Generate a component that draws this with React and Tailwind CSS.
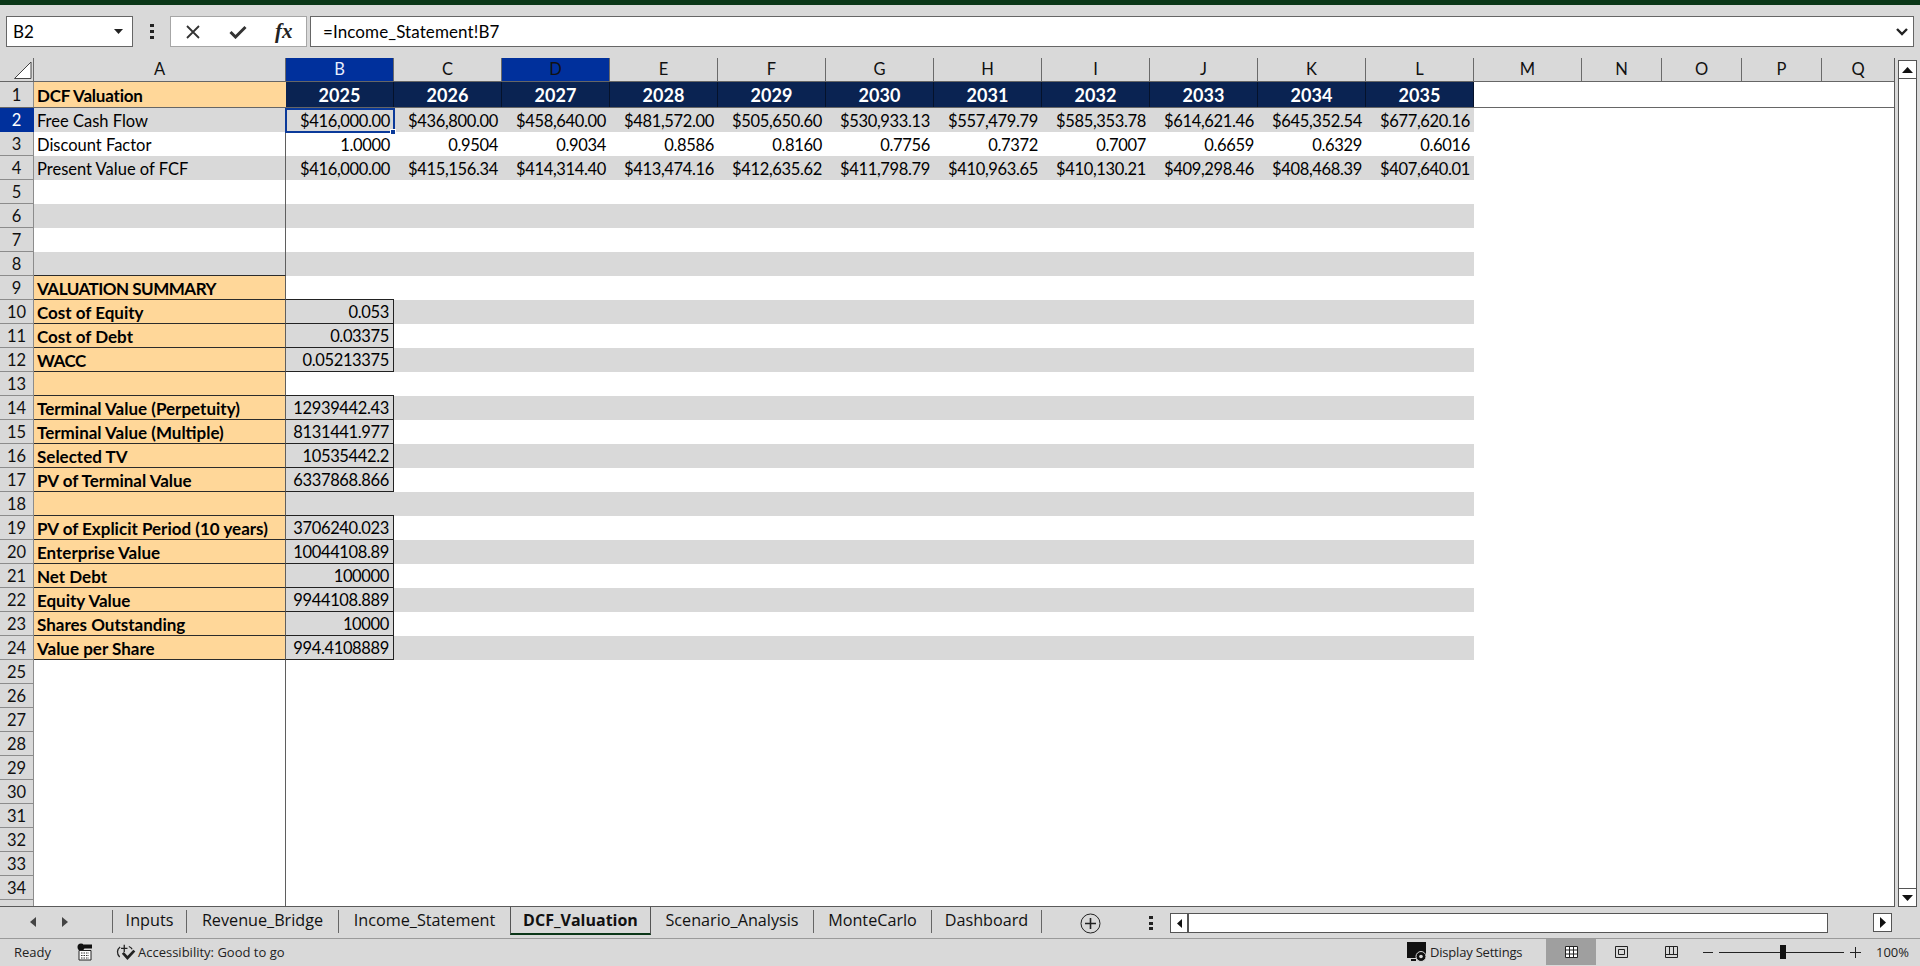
import React from 'react'

const cols = ['B', 'C', 'D', 'E', 'F', 'G', 'H', 'I', 'J', 'K', 'L']
const years = ['2025', '2026', '2027', '2028', '2029', '2030', '2031', '2032', '2033', '2034', '2035']

const fcf = ['$416,000.00', '$436,800.00', '$458,640.00', '$481,572.00', '$505,650.60', '$530,933.13', '$557,479.79', '$585,353.78', '$614,621.46', '$645,352.54', '$677,620.16']
const discount = ['1.0000', '0.9504', '0.9034', '0.8586', '0.8160', '0.7756', '0.7372', '0.7007', '0.6659', '0.6329', '0.6016']
const pv = ['$416,000.00', '$415,156.34', '$414,314.40', '$413,474.16', '$412,635.62', '$411,798.79', '$410,963.65', '$410,130.21', '$409,298.46', '$408,468.39', '$407,640.01']

const summary = {
  9: ['VALUATION SUMMARY'],
  10: ['Cost of Equity', '0.053'],
  11: ['Cost of Debt', '0.03375'],
  12: ['WACC', '0.05213375'],
  13: [''],
  14: ['Terminal Value (Perpetuity)', '12939442.43'],
  15: ['Terminal Value (Multiple)', '8131441.977'],
  16: ['Selected TV', '10535442.2'],
  17: ['PV of Terminal Value', '6337868.866'],
  18: [''],
  19: ['PV of Explicit Period (10 years)', '3706240.023'],
  20: ['Enterprise Value', '10044108.89'],
  21: ['Net Debt', '100000'],
  22: ['Equity Value', '9944108.889'],
  23: ['Shares Outstanding', '10000'],
  24: ['Value per Share', '994.4108889'],
}

const tabs = [
  { name: 'Inputs', w: 'w-[74px]' },
  { name: 'Revenue_Bridge', w: 'w-[152px]' },
  { name: 'Income_Statement', w: 'w-[172px]' },
  { name: 'DCF_Valuation', w: 'w-[141px]', active: true },
  { name: 'Scenario_Analysis', w: 'w-[163px]' },
  { name: 'MonteCarlo', w: 'w-[118px]' },
  { name: 'Dashboard', w: 'w-[110px]' },
]

const rows = []
for (let n = 2; n <= 34; n++) rows.push(n)

const ColHead = ({ label, w, selected, dark }) => (
  <div className={`${w} h-full shrink-0 flex items-center justify-center border-r border-[#6a6a6a] ${selected ? 'bg-[#00309c]' : ''} ${dark ? 'text-[#e8eefc]' : 'text-[#111]'}`}>
    {label}
  </div>
)

const SheetRow = ({ n }) => {
  const striped = n % 2 === 0 && n <= 24
  const data = summary[n]
  const values = n === 2 ? fcf : n === 3 ? discount : n === 4 ? pv : null
  const hasBox = data && data[1]
  // the cell above a boxed block draws the top edge of that block
  const capsBox = n === 9 || n === 13 || n === 18
  const caps = n === 9 || n === 12

  let aClass = ''
  if (striped) aClass = 'bg-[#d9d9d9]'
  if (data) aClass = `bg-[#ffd799] font-bold text-[17px] border-b border-[#2b2b2b] ${caps ? 'tracking-[-0.5px]' : ''}`
  if (n === 8) aClass += ' border-b border-[#2b2b2b]'

  return (
    <div className="flex h-[24px] shrink-0">
      <div className={`w-[34px] shrink-0 flex items-center justify-center pt-[2px] border-r border-b ${n === 2 ? 'bg-[#00309c] text-white border-[#00309c]' : 'bg-[#d9d9d9] text-[#111] border-[#8c8c8c]'}`}>
        {n}
      </div>
      <div className={`w-[252px] shrink-0 flex items-center pl-[3px] pt-[2px] border-r border-r-[#5f5f5f] whitespace-nowrap ${aClass}`}>
        {n === 2 ? 'Free Cash Flow' : n === 3 ? 'Discount Factor' : n === 4 ? 'Present Value of FCF' : data ? data[0] : ''}
      </div>
      {cols.map((c, i) => {
        const fill = striped || (hasBox && i === 0) ? 'bg-[#d9d9d9]' : ''
        const boxed = hasBox && i === 0 ? 'border-r border-b border-[#222]' : ''
        const cap = capsBox && i === 0 ? 'border-b border-[#222]' : ''
        return (
          <div key={c} className={`w-[108px] shrink-0 flex items-center justify-end pr-[4px] pt-[2px] tracking-[-0.35px] ${fill} ${boxed} ${cap}`}>
            {values ? values[i] : hasBox && i === 0 ? data[1] : ''}
          </div>
        )
      })}
    </div>
  )
}

const ArrowBtn = ({ children, className }) => (
  <div className={`w-[19px] h-[19px] shrink-0 bg-white border border-[#555] flex items-center justify-center ${className || ''}`}>
    {children}
  </div>
)

export default function App() {
  return (
    <div className="w-[1920px] h-[966px] overflow-hidden flex flex-col bg-[#d9d9d9] text-black font-[Lato,sans-serif] text-[16.5px]">
      <div className="h-[5px] shrink-0 bg-[#0a3617]" />

      {/* formula bar */}
      <div className="flex h-[31px] mt-[11px] shrink-0 pl-[6px] pr-[6px]">
        <div className="w-[127px] bg-white border border-[#666] flex items-center justify-between pl-[6px] pr-[8px] text-[17px]">
          <span>B2</span>
          <svg width="10" height="6" viewBox="0 0 10 6"><path d="M0 0h9L4.500 5z" fill="#222" /></svg>
        </div>
        <div className="w-[37px] flex flex-col items-center justify-center gap-[3px]">
          <span className="w-[4px] h-[3px] bg-[#222]" />
          <span className="w-[4px] h-[3px] bg-[#222]" />
          <span className="w-[4px] h-[3px] bg-[#222]" />
        </div>
        <div className="w-[137px] bg-white border border-[#a6a6a6] flex items-center">
          <svg className="ml-[15px]" width="14" height="14" viewBox="0 0 14 14"><path d="M1 1l12 12M13 1L1 13" stroke="#333" strokeWidth="1.8" fill="none" /></svg>
          <svg className="ml-[29px]" width="18" height="14" viewBox="0 0 18 14"><path d="M1.500 7l5 5L16.500 2" stroke="#333" strokeWidth="3" fill="none" /></svg>
          <span className="ml-[28px] font-['Liberation_Serif',serif] italic font-bold text-[21px] leading-none text-[#222]">fx</span>
        </div>
        <div className="w-[3px]" />
        <div className="flex-1 bg-white border border-[#666] flex items-center justify-between pl-[12px] pr-[5px] text-[17px]">
          <span className="tracking-[0.1px]">=Income_Statement!B7</span>
          <svg width="12" height="8" viewBox="0 0 12 8"><path d="M1 1l5 5 5-5" stroke="#222" strokeWidth="2.400" fill="none" /></svg>
        </div>
      </div>

      {/* sheet */}
      <div className="flex mt-[11px] h-[849px] shrink-0">
        <div className="w-[1895px] shrink-0 border-r border-b border-[#5a5a5a] bg-white overflow-hidden">
          <div className="flex h-[24px] border-b border-[#666] bg-[#d9d9d9]">
            <div className="w-[34px] shrink-0 border-r border-[#6a6a6a]">
              <svg width="33" height="23" viewBox="0 0 33 23"><path d="M14.500 20.500h16.500v-16.500z" fill="#fff" stroke="#444" /></svg>
            </div>
            <ColHead label="A" w="w-[252px]" />
            {cols.map((c) => (
              <ColHead key={c} label={c} w="w-[108px]" selected={c === 'B' || c === 'D'} dark={c === 'B'} />
            ))}
            <ColHead label="M" w="w-[108px]" />
            <ColHead label="N" w="w-[80px]" />
            <ColHead label="O" w="w-[80px]" />
            <ColHead label="P" w="w-[80px]" />
            <div className="flex-1 flex items-center justify-center text-[#111]">Q</div>
          </div>

          <div className="flex h-[26px] border-b border-[#666]">
            <div className="w-[34px] shrink-0 flex items-center justify-center pt-[2px] border-r border-[#8c8c8c] bg-[#d9d9d9] text-[#111]">1</div>
            <div className="w-[252px] shrink-0 flex items-center pl-[3px] pt-[3px] bg-[#ffd799] font-bold text-[17px] tracking-[-0.2px]">DCF Valuation</div>
            {years.map((y) => (
              <div key={y} className="w-[108px] shrink-0 flex items-center justify-center pt-[2px] bg-[#0a2352] text-white font-bold text-[18px] border-r border-[#05122b]">{y}</div>
            ))}
          </div>

          <div className="relative">
            {rows.map((n) => <SheetRow key={n} n={n} />)}
            <div className="flex h-[6px]">
              <div className="w-[34px] bg-[#d9d9d9] border-r border-[#8c8c8c]" />
              <div className="w-[252px] border-r border-[#5f5f5f]" />
            </div>
            {/* active cell */}
            <div className="absolute left-[285px] top-0 w-[110px] h-[25px] border-2 border-[#0b3a9a]" />
            <div className="absolute left-[390px] top-[21px] w-[6px] h-[6px] bg-[#0b3a9a] border border-white" />
          </div>
        </div>

        {/* vertical scrollbar */}
        <div className="ml-[3px] w-[19px] flex flex-col mt-[2px]">
          <ArrowBtn><svg width="11" height="6" viewBox="0 0 11 6"><path d="M5.500 0l5.500 6H0z" fill="#111" /></svg></ArrowBtn>
          <div className="flex-1 bg-white border-x border-[#555]" />
          <ArrowBtn><svg width="11" height="6" viewBox="0 0 11 6"><path d="M0 0h11L5.500 6z" fill="#111" /></svg></ArrowBtn>
        </div>
      </div>

      {/* sheet tabs */}
      <div className="flex h-[32px] shrink-0 border-b border-[#9a9a9a] font-['Open_Sans',sans-serif] text-[16.2px]">
        <div className="w-[112px] shrink-0 flex items-center gap-[26px] pl-[30px] pb-[2px]">
          <svg width="6" height="10" viewBox="0 0 6 10"><path d="M6 0v10L0 5z" fill="#444" /></svg>
          <svg width="6" height="10" viewBox="0 0 6 10"><path d="M0 0v10l6-5z" fill="#444" /></svg>
        </div>
        <div className="w-px h-[23px] mt-[3px] bg-[#666]" />
        {tabs.map((t) =>
          t.active ? (
            <div key={t.name} className={`${t.w} h-[28px] shrink-0 -ml-px flex items-center justify-center border-x border-[#555] border-b-2 border-b-[#0a3617] font-bold text-[16px] text-[#111]`}>
              {t.name}
            </div>
          ) : (
            <div key={t.name} className={`${t.w} h-[23px] mt-[3px] pb-[2px] shrink-0 flex items-center justify-center border-r border-[#666] text-[#111]`}>
              {t.name}
            </div>
          )
        )}
        <svg className="ml-[38px] mt-[6px]" width="21" height="21" viewBox="0 0 21 21">
          <circle cx="10.500" cy="10.500" r="9.500" fill="none" stroke="#222" />
          <path d="M10.500 5v11M5 10.500h11" stroke="#222" strokeWidth="1.600" />
        </svg>
        <div className="ml-[48px] mt-[9px] w-[4px] flex flex-col gap-[2.5px]">
          <span className="w-[4px] h-[3px] bg-[#222]" />
          <span className="w-[4px] h-[3px] bg-[#222]" />
          <span className="w-[4px] h-[3px] bg-[#222]" />
        </div>
        <div className="ml-[17px] mt-[6px] w-[658px] h-[20px] flex bg-white border border-[#555]">
          <div className="w-[18px] h-full border-r-2 border-[#555] flex items-center justify-center">
            <svg width="5" height="9" viewBox="0 0 5 9"><path d="M5 0v9L0 4.500z" fill="#111" /></svg>
          </div>
        </div>
        <ArrowBtn className="ml-[45px] mt-[6px]">
          <svg width="6" height="11" viewBox="0 0 6 11"><path d="M0 0v11l6-5.500z" fill="#111" /></svg>
        </ArrowBtn>
      </div>

      {/* status bar */}
      <div className="flex items-center h-[26px] shrink-0 font-['Open_Sans',sans-serif] text-[13px] text-[#222]">
        <span className="ml-[14px] w-[36px] pt-[2px]">Ready</span>
        <svg className="ml-[27px]" width="16" height="18" viewBox="0 0 16 18">
          <circle cx="4" cy="4" r="3.500" fill="#111" />
          <path d="M7 1.500h8v4H7z" fill="#111" />
          <path d="M2 7.500h12v9.500H2z" fill="#fff" stroke="#222" />
          <path d="M4 10h8M4 12.500h8M4 15h8" stroke="#333" strokeDasharray="1.5 1" />
        </svg>
        <svg className="ml-[23px]" width="22" height="18" viewBox="0 0 24 18">
          <path d="M4.500 3.500C1 6 .5 11 4 14.500M14 3c2 .6 3 1.600 3.600 3" fill="none" stroke="#222" strokeWidth="1.400" />
          <path d="M9 1v8M5.500 5h7" stroke="#222" strokeWidth="1.400" />
          <path d="M7.500 10l5 5.500L20 7.500" fill="none" stroke="#222" strokeWidth="3" />
        </svg>
        <span className="pt-[2px]">Accessibility: Good to go</span>

        <div className="ml-auto flex items-center h-full">
          <svg width="20" height="20" viewBox="0 0 20 20">
            <path d="M0 0h19v13H13v3H0z" fill="#111" />
            <path d="M4 18h5" stroke="#111" strokeWidth="2" />
            <circle cx="14" cy="14.500" r="5" fill="#111" stroke="#d9d9d9" />
            <circle cx="14" cy="14.500" r="1.800" fill="#d9d9d9" />
          </svg>
          <span className="ml-[3px] w-[116px] pt-[2px] tracking-[-0.2px]">Display Settings</span>
          <div className="w-[50px] h-full bg-[#9f9f9f] flex items-center justify-center">
            <svg width="13" height="12" viewBox="0 0 13 12">
              <path d="M.5.5h12v11H.5z" fill="#fff" stroke="#222" />
              <path d="M.5 4h12M.5 8h12M4.500.5v11M8.500.5v11" stroke="#222" />
            </svg>
          </div>
          <div className="w-[50px] flex justify-center">
            <svg width="13" height="12" viewBox="0 0 13 12">
              <path d="M.5.5h12v11H.5z" fill="none" stroke="#222" />
              <path d="M3.500 3.500h6v5h-6z" fill="none" stroke="#222" />
            </svg>
          </div>
          <div className="w-[50px] flex justify-center">
            <svg width="13" height="12" viewBox="0 0 13 12">
              <path d="M.5.5h12v11H.5z" fill="none" stroke="#222" />
              <path d="M.5 8.500h12M4.500.5v8M8.500.5v8" stroke="#222" />
            </svg>
          </div>
          <div className="w-[10px] h-px bg-[#222] ml-[7px]" />
          <div className="relative w-[125px] h-px bg-[#222] ml-[6px]">
            <div className="absolute left-[61px] -top-[7px] w-[6px] h-[14px] bg-[#111]" />
          </div>
          <svg className="ml-[6px]" width="11" height="11" viewBox="0 0 11 11"><path d="M5.500 0v11M0 5.500h11" stroke="#222" /></svg>
          <span className="ml-[15px] mr-[12px] w-[32px] pt-[2px]">100%</span>
        </div>
      </div>
    </div>
  )
}
